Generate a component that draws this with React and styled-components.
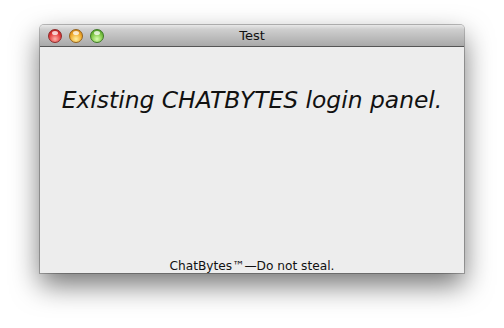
import React from 'react';
import styled, { createGlobalStyle } from 'styled-components';

const GlobalStyle = createGlobalStyle`
  html, body {
    margin: 0;
    padding: 0;
    background: #ffffff;
  }
  body {
    font-family: "DejaVu Sans", Verdana, sans-serif;
  }
`;

const Page = styled.div`
  width: 504px;
  height: 328px;
  padding: 25px 0 0 40px;
  box-sizing: border-box;
`;

const Window = styled.div`
  width: 424px;
  height: 248px;
  display: flex;
  flex-direction: column;
  border-radius: 4px 4px 0 0;
  box-shadow: 0 12px 28px rgba(0, 0, 0, 0.55), 0 0 0 1px rgba(0, 0, 0, 0.25);
  background: #ededed;
`;

const TitleBar = styled.div`
  height: 21px;
  flex: none;
  display: flex;
  align-items: center;
  position: relative;
  padding-left: 8px;
  gap: 7px;
  border-radius: 4px 4px 0 0;
  border-bottom: 1px solid #555;
  background: linear-gradient(#e8e8e8, #cfcfcf 20%, #a9a9a9);
`;

const Light = styled.span`
  width: 14px;
  height: 14px;
  margin-top: 1px;
  border-radius: 50%;
  box-sizing: border-box;
  border: 1px solid ${p => p.edge};
  background: radial-gradient(circle at 50% 75%, ${p => p.glow} 0%, ${p => p.base} 55%, ${p => p.dark} 100%);
  position: relative;

  &::after {
    content: '';
    position: absolute;
    left: 3px;
    top: 1px;
    width: 6px;
    height: 4px;
    border-radius: 50%;
    background: rgba(255, 255, 255, 0.75);
  }
`;

const Title = styled.div`
  position: absolute;
  left: 0;
  right: 0;
  top: 3px;
  text-align: center;
  font-size: 13px;
  color: #111;
  pointer-events: none;
`;

const Content = styled.div`
  flex: 1;
  display: flex;
  flex-direction: column;
  align-items: center;
  justify-content: space-between;
  padding-top: 39px;
`;

const Heading = styled.div`
  font-style: italic;
  font-size: 23.4px;
  color: #111;
`;

const Footer = styled.div`
  font-size: 12.2px;
  color: #111;
  padding-bottom: 0;
`;

export default function App() {
  return (
    <>
      <GlobalStyle />
      <Page>
        <Window>
          <TitleBar>
            <Light edge="#8e2a2a" base="#e23c3c" glow="#ffb0a8" dark="#a51414" />
            <Light edge="#94621b" base="#f0a92a" glow="#fff0a0" dark="#c27410" />
            <Light edge="#3d7a25" base="#7cc443" glow="#d8ffb0" dark="#3f8e1e" />
            <Title>Test</Title>
          </TitleBar>
          <Content>
            <Heading>Existing CHATBYTES login panel.</Heading>
            <Footer>ChatBytes™—Do not steal.</Footer>
          </Content>
        </Window>
      </Page>
    </>
  );
}
